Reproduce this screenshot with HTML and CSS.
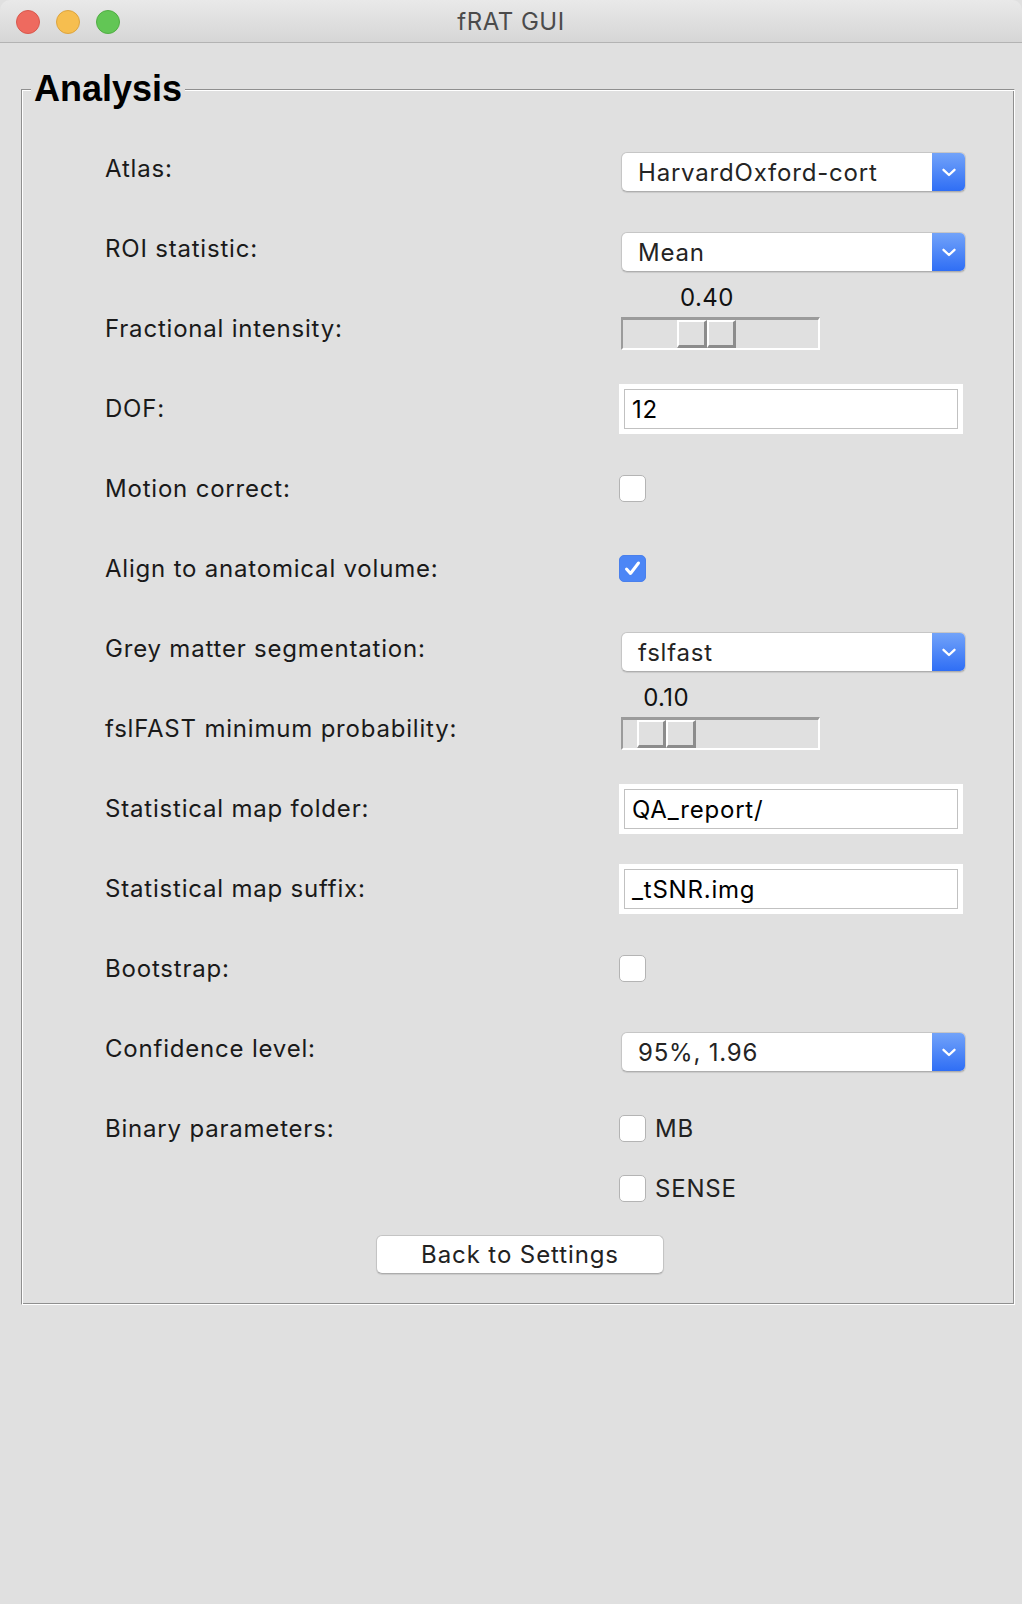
FILE: index.html
```html
<!DOCTYPE html>
<html lang="en">
<head>
<meta charset="utf-8">
<title>fRAT GUI</title>
<link rel="stylesheet" href="styles.css">
</head>
<body>
<div class="window">
  <header class="titlebar">
    <div class="lights">
      <span class="light red"></span>
      <span class="light yellow"></span>
      <span class="light green"></span>
    </div>
    <div class="title">fRAT GUI</div>
    <div class="spacer"></div>
  </header>

  <main class="content">
    <fieldset class="group">
      <legend class="group-title">Analysis</legend>
      <div class="form">
        <div class="label">Atlas:</div>
        <div class="cell"><div class="select"><span class="select-text">HarvardOxford-cort</span><span class="select-btn"><svg width="14" height="9" viewBox="0 0 14 9"><path d="M1.5 1.8 L7 7 L12.5 1.8" fill="none" stroke="#fff" stroke-width="2.3" stroke-linecap="round" stroke-linejoin="round"/></svg></span></div></div>

        <div class="label">ROI statistic:</div>
        <div class="cell"><div class="select"><span class="select-text">Mean</span><span class="select-btn"><svg width="14" height="9" viewBox="0 0 14 9"><path d="M1.5 1.8 L7 7 L12.5 1.8" fill="none" stroke="#fff" stroke-width="2.3" stroke-linecap="round" stroke-linejoin="round"/></svg></span></div></div>

        <div class="label">Fractional intensity:</div>
        <div class="cell"><div class="slider" style="--pos: 0.40"><div class="slider-value">0.40</div><div class="trough"><div class="thumb"><span class="thumb-half"></span><span class="thumb-half"></span></div></div></div></div>

        <div class="label">DOF:</div>
        <div class="cell"><div class="entry"><div class="entry-field">12</div></div></div>

        <div class="label">Motion correct:</div>
        <div class="cell"><span class="check"></span></div>

        <div class="label">Align to anatomical volume:</div>
        <div class="cell"><span class="check checked"><svg width="27" height="27" viewBox="0 0 27 27"><path d="M7.5 14 L11.5 18.5 L19.5 8" fill="none" stroke="#fff" stroke-width="3" stroke-linecap="round" stroke-linejoin="round"/></svg></span></div>

        <div class="label">Grey matter segmentation:</div>
        <div class="cell"><div class="select"><span class="select-text">fslfast</span><span class="select-btn"><svg width="14" height="9" viewBox="0 0 14 9"><path d="M1.5 1.8 L7 7 L12.5 1.8" fill="none" stroke="#fff" stroke-width="2.3" stroke-linecap="round" stroke-linejoin="round"/></svg></span></div></div>

        <div class="label">fslFAST minimum probability:</div>
        <div class="cell"><div class="slider" style="--pos: 0.10"><div class="slider-value">0.10</div><div class="trough"><div class="thumb"><span class="thumb-half"></span><span class="thumb-half"></span></div></div></div></div>

        <div class="label">Statistical map folder:</div>
        <div class="cell"><div class="entry"><div class="entry-field">QA_report/</div></div></div>

        <div class="label">Statistical map suffix:</div>
        <div class="cell"><div class="entry"><div class="entry-field">_tSNR.img</div></div></div>

        <div class="label">Bootstrap:</div>
        <div class="cell"><span class="check"></span></div>

        <div class="label">Confidence level:</div>
        <div class="cell"><div class="select"><span class="select-text">95%, 1.96</span><span class="select-btn"><svg width="14" height="9" viewBox="0 0 14 9"><path d="M1.5 1.8 L7 7 L12.5 1.8" fill="none" stroke="#fff" stroke-width="2.3" stroke-linecap="round" stroke-linejoin="round"/></svg></span></div></div>

        <div class="label">Binary parameters:</div>
        <div class="cell">
          <div class="check-list">
            <label class="check-item"><span class="check"></span><span class="check-text">MB</span></label>
            <label class="check-item"><span class="check"></span><span class="check-text">SENSE</span></label>
          </div>
        </div>
      </div>
      <div class="actions">
        <button class="button" type="button">Back to Settings</button>
      </div>
    </fieldset>
  </main>
</div>
</body>
</html>
```

FILE: styles.css
```css
* { box-sizing: border-box; }

html, body {
  margin: 0;
  padding: 0;
  background: #e0e0e0;
}

body {
  font-family: Inter, "Noto Sans", "Liberation Sans", sans-serif;
  color: #1e1e1e;
}

.window {
  width: 1022px;
  height: 1604px;
  background: #e0e0e0;
  border-radius: 10px 10px 0 0;
  overflow: hidden;
}

/* ---------- title bar ---------- */
.titlebar {
  height: 43px;
  display: grid;
  grid-template-columns: 1fr auto 1fr;
  align-items: center;
  background: linear-gradient(#e9e9e9, #d6d6d6);
  border-bottom: 1px solid #b3b3b3;
  padding-top: 1px;
}

.lights {
  display: flex;
  gap: 16px;
  padding-left: 16px;
}

.light {
  width: 24px;
  height: 24px;
  border-radius: 50%;
  display: block;
}
.light.red    { background: #ee6a5f; border: 1px solid #d8584d; }
.light.yellow { background: #f6be4f; border: 1px solid #dca43f; }
.light.green  { background: #62c655; border: 1px solid #51ad44; }

.title {
  font-size: 24px;
  color: #4b4b4b;
  letter-spacing: 0.5px;
}

/* ---------- group box ---------- */
.group {
  margin: 28px 7px 0 21px;
  padding: 21px 0 30px 0;
  border: 1px solid;
  border-color: #8f8f8f #ffffff #ffffff #8f8f8f;
  box-shadow: inset 1px 1px 0 #ffffff, inset -1px -1px 0 #8f8f8f;
  min-width: 0;
}

.group-title {
  margin-left: 9px;
  padding: 0 3px;
  font-family: "Liberation Sans", Arial, sans-serif;
  font-weight: bold;
  font-size: 36px;
  line-height: 36px;
  color: #000;
  background: #e0e0e0;
}

.form {
  display: grid;
  grid-template-columns: 514px 1fr;
  grid-auto-rows: minmax(80px, auto);
  padding-left: 83px;
}

.label {
  height: 80px;
  display: flex;
  align-items: center;
  font-size: 24px;
  letter-spacing: 0.8px;
  color: #1a1a1a;
  white-space: nowrap;
}

.cell {
  display: flex;
  flex-direction: column;
  align-items: flex-start;
}

/* ---------- dropdown ---------- */
.select {
  margin: 24px 0 0 2px;
  width: 345px;
  height: 40px;
  display: flex;
  background: #fff;
  border: 1px solid #c6c6c6;
  border-bottom-color: #aeaeae;
  border-radius: 6px;
  box-shadow: 0 1px 1px rgba(0, 0, 0, 0.10);
  overflow: hidden;
}

.select-text {
  flex: 1;
  display: flex;
  align-items: center;
  padding-left: 16px;
  font-size: 24px;
  letter-spacing: 0.8px;
  color: #242424;
  white-space: nowrap;
}

.select-btn {
  width: 33px;
  display: flex;
  align-items: center;
  justify-content: center;
  background: linear-gradient(#72a3f9, #2f6ef5);
}

/* ---------- slider ---------- */
.slider {
  margin-left: 2px;
  width: 199px;
}

.slider-value {
  width: 59px;
  margin-left: calc(2px + var(--pos) * 136px);
  text-align: center;
  font-size: 24px;
  letter-spacing: 0.4px;
  line-height: 20px;
  color: #111;
}

.trough {
  margin-top: 9px;
  height: 33px;
  border-style: solid;
  border-width: 3px 2px 2px 2px;
  border-color: #9b9b9b #ffffff #ffffff #9b9b9b;
  background: #e0e0e0;
}

.thumb {
  width: 59px;
  height: 28px;
  display: flex;
  margin-left: calc(var(--pos) * 136px);
}

.thumb-half {
  flex: 1;
  border-style: solid;
  border-width: 2px 3px 3px 2px;
  border-color: #ffffff #8c8c8c #8c8c8c #ffffff;
  background: #e0e0e0;
}

/* ---------- entry ---------- */
.entry {
  margin-top: 16px;
  width: 344px;
  height: 50px;
  padding: 5px;
  background: #fff;
}

.entry-field {
  height: 40px;
  border: 1px solid #c1c1c1;
  display: flex;
  align-items: center;
  padding-left: 7px;
  font-size: 24px;
  letter-spacing: 0.8px;
  color: #000;
  white-space: nowrap;
}

/* ---------- checkbox ---------- */
.check {
  margin-top: 27px;
  width: 27px;
  height: 27px;
  display: block;
  flex: none;
  background: #fff;
  border: 1px solid #b4b4b4;
  border-radius: 5px;
}

.check.checked {
  background: #4c86f6;
  border-color: #4a80ec;
}

.check.checked svg { display: block; margin: -1px; }

.check-list {
  display: flex;
  flex-direction: column;
  margin-top: 27px;
  gap: 33px;
}

.check-item {
  display: flex;
  align-items: center;
  gap: 9px;
  height: 27px;
}

.check-item .check { margin-top: 0; }

.check-text {
  font-size: 24px;
  line-height: 27px;
  letter-spacing: 0.8px;
  color: #222;
}

/* ---------- button ---------- */
.actions {
  display: flex;
  justify-content: center;
  padding-left: 4px;
  margin-top: 33px;
}

.button {
  width: 288px;
  height: 39px;
  background: #fff;
  border: 1px solid #c4c4c4;
  border-bottom-color: #acacac;
  border-radius: 6px;
  box-shadow: 0 1px 1px rgba(0, 0, 0, 0.10);
  font-family: Inter, "Noto Sans", sans-serif;
  font-size: 24px;
  letter-spacing: 0.9px;
  color: #222;
  padding: 0;
}
```
